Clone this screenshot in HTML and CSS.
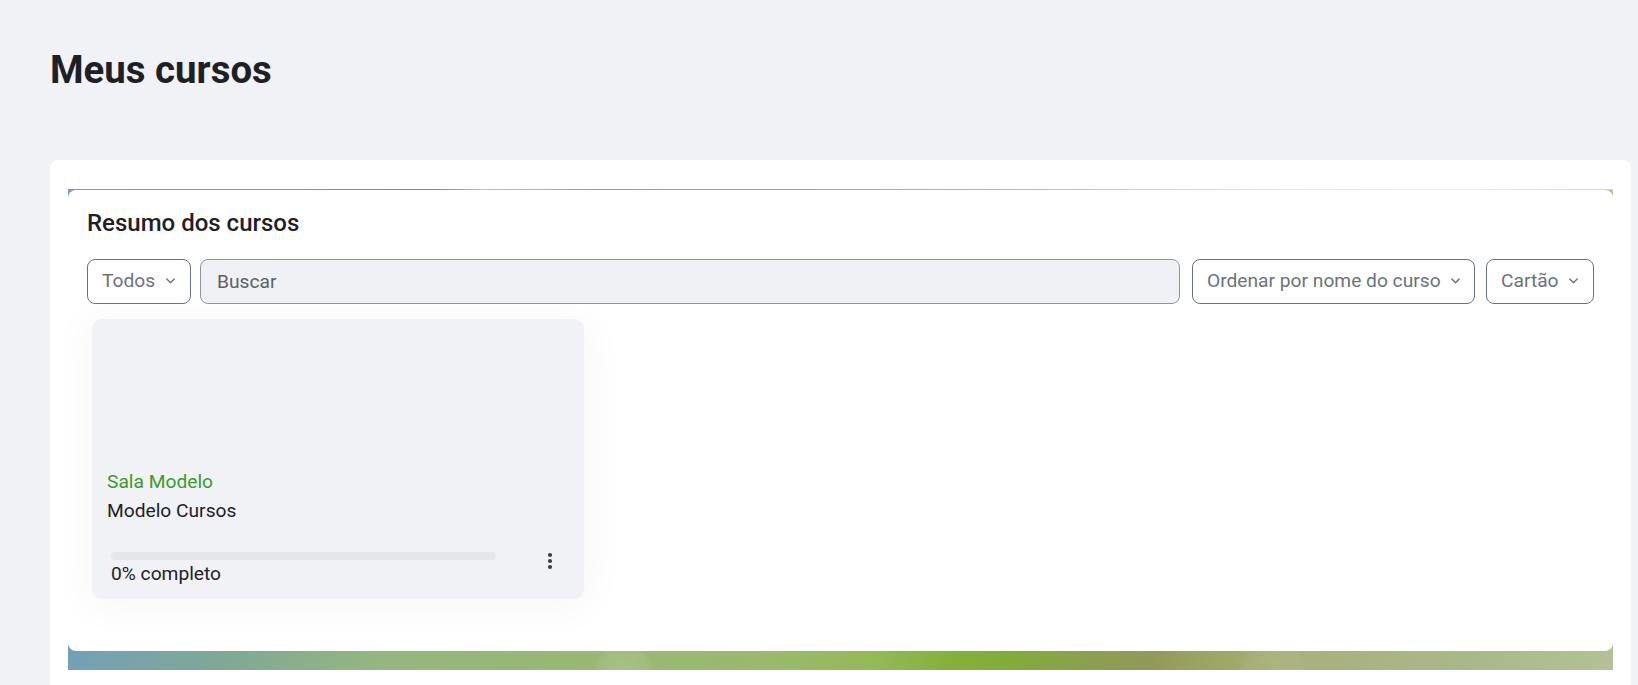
FILE: index.html
```html
<!DOCTYPE html>
<html lang="pt-BR">
<head>
<meta charset="utf-8">
<title>Meus cursos</title>
<link rel="stylesheet" href="styles.css">
</head>
<body>
<div class="page">
  <h1 class="page-title">Meus cursos</h1>
  <section class="main-card">
    <div class="block">
      <div class="panel">
        <h2 class="block-title">Resumo dos cursos</h2>
        <div class="filters">
          <button class="select w-todos"><span>Todos</span>
            <svg class="chev" width="9" height="6" viewBox="0 0 9 6"><path d="M0.8 1l3.7 3.7 3.7-3.7" fill="none" stroke="currentColor" stroke-width="1.4" stroke-linecap="round" stroke-linejoin="round"/></svg>
          </button>
          <div class="search">Buscar</div>
          <button class="select w-order"><span>Ordenar por nome do curso</span>
            <svg class="chev" width="9" height="6" viewBox="0 0 9 6"><path d="M0.8 1l3.7 3.7 3.7-3.7" fill="none" stroke="currentColor" stroke-width="1.4" stroke-linecap="round" stroke-linejoin="round"/></svg>
          </button>
          <button class="select w-view"><span>Cartão</span>
            <svg class="chev" width="9" height="6" viewBox="0 0 9 6"><path d="M0.8 1l3.7 3.7 3.7-3.7" fill="none" stroke="currentColor" stroke-width="1.4" stroke-linecap="round" stroke-linejoin="round"/></svg>
          </button>
        </div>
        <div class="course-card">
          <div class="course-img"></div>
          <div class="course-body">
            <div class="course-cat">Sala Modelo</div>
            <div class="course-name">Modelo Cursos</div>
            <div class="course-footer">
              <div class="progress-wrap">
                <div class="progress"></div>
                <div class="progress-text">0% completo</div>
              </div>
              <div class="kebab">
                <svg width="20" height="20" viewBox="0 0 20 20"><circle cx="10" cy="4" r="2.1" fill="#3b4045"/><circle cx="10" cy="10" r="2.1" fill="#3b4045"/><circle cx="10" cy="16" r="2.1" fill="#3b4045"/></svg>
              </div>
            </div>
          </div>
        </div>
      </div>
    </div>
  </section>
</div>
</body>
</html>
```
FILE: styles.css
```css
html, body {
  margin: 0;
  padding: 0;
}
body {
  background: #f1f2f5;
  font-family: Roboto, "Liberation Sans", Arial, sans-serif;
  color: #1d2125;
  overflow: hidden;
}
.page {
  padding: 0 7px 0 50px;
}
.page-title {
  margin: 47px 0 0;
  font-size: 38.4px;
  font-weight: 700;
  line-height: 1.2;
  color: #1d2125;
}
.main-card {
  margin-top: 67px;
  background: #fff;
  border-radius: 8px;
  padding: 29px 18px 60px;
}
.block {
  padding: 1px 0 19px;
  background:
    linear-gradient(to right, #5a9cf0 0%, #5b9bee 14%, #6f8fae 24%, #b8c8b0 27%, #8fa890 34%, #9db56a 48%, #a9bf78 58%, #c8d4a8 68%, #e4e8d4 78%, #f0f0e2 90%, #d4dcb4 100%) top left / 100% 1px no-repeat,
    radial-gradient(circle at 36% 100%, rgba(255,255,255,0.12) 0, rgba(255,255,255,0.08) 24px, rgba(255,255,255,0) 30px),
    radial-gradient(circle at 40% 120%, rgba(255,255,255,0.12) 0, rgba(255,255,255,0.08) 30px, rgba(255,255,255,0) 36px),
    radial-gradient(circle at 57% 120%, rgba(255,255,255,0.1) 0, rgba(255,255,255,0.06) 22px, rgba(255,255,255,0) 28px),
    radial-gradient(circle at 71% 80%, rgba(255,255,255,0.1) 0, rgba(255,255,255,0.06) 20px, rgba(255,255,255,0) 26px),
    radial-gradient(circle at 78% 100%, rgba(255,255,255,0.08) 0, rgba(255,255,255,0.05) 28px, rgba(255,255,255,0) 34px),
    radial-gradient(circle at 93% 120%, rgba(255,255,255,0.1) 0, rgba(255,255,255,0.06) 26px, rgba(255,255,255,0) 32px),
    radial-gradient(circle at 99% 70%, rgba(255,255,255,0.12) 0, rgba(255,255,255,0.08) 20px, rgba(255,255,255,0) 26px),
    linear-gradient(to right, #72a1b6 0%, #7fa896 10%, #93b77f 20%, #98b776 30%, #9ab96e 45%, #94ba58 52%, #84b13c 57%, #82ac3a 61%, #8aa050 66%, #929858 70%, #a0a868 75%, #a8b07c 80%, #a9b888 90%, #b3c294 100%);
}
.panel {
  background: #fff;
  border-radius: 8px;
  padding: 19px 19px 52px;
}
.block-title {
  margin: 0;
  font-size: 24px;
  font-weight: 500;
  line-height: 1.2;
  color: #1d2125;
}
.filters {
  margin-top: 21px;
  display: flex;
  height: 45px;
}
.select {
  box-sizing: border-box;
  height: 45px;
  display: flex;
  align-items: center;
  justify-content: space-between;
  padding: 0 15px 0 14px;
  border: 1px solid #6a737b;
  border-radius: 8px;
  background: #fff;
  color: #6a737b;
  font-family: inherit;
  font-size: 19.2px;
  line-height: 1.5;
  white-space: nowrap;
}
.chev {
  margin-left: 10px;
  flex: none;
}
.w-todos { width: 104px; }
.w-order { width: 283px; margin-left: 12px; }
.w-view { width: 108px; margin-left: 11px; }
.search {
  flex: 1;
  box-sizing: border-box;
  height: 45px;
  margin-left: 9px;
  display: flex;
  align-items: center;
  padding: 0 16px;
  border: 1px solid #8f959e;
  border-radius: 8px;
  background: #f0f1f5;
  color: #5a6168;
  font-size: 19.2px;
}
.course-card {
  margin: 15px 0 0 5px;
  width: 492px;
  background: #f1f2f6;
  border-radius: 10px;
  box-shadow: 0 4px 40px 6px rgba(0, 0, 0, 0.035);
}
.course-img {
  height: 134px;
}
.course-body {
  padding: 15px 15px 10px;
  font-size: 19.2px;
  line-height: 1.5;
}
.course-cat {
  color: #3a9b2b;
}
.course-name {
  color: #1d2125;
}
.course-footer {
  margin-top: 27px;
  padding-left: 4px;
  display: flex;
}
.progress-wrap {
  width: 385px;
}
.progress {
  height: 8px;
  border-radius: 4px;
  background: #e4e6ea;
}
.progress-text {
  color: #1d2125;
}
.kebab {
  margin: -1px 9px 0 auto;
  width: 20px;
  height: 20px;
}
.kebab svg {
  display: block;
}
```
